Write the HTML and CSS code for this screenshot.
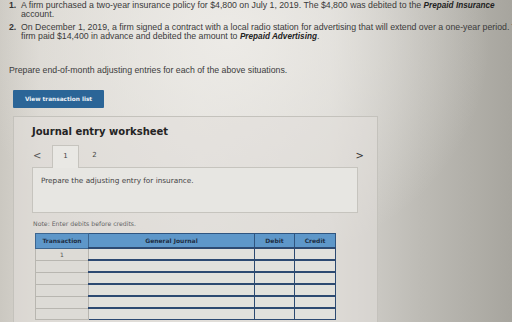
FILE: index.html
```html
<!DOCTYPE html>
<html>
<head>
<meta charset="utf-8">
<link rel="stylesheet" href="styles.css">
</head>
<body>
<div class="page">
  <div class="questions">
    <div class="q"><span class="num">1.</span><span class="qt">A firm purchased a two-year insurance policy for $4,800 on July 1, 2019. The $4,800 was debited to the <b><i>Prepaid Insurance</i></b> account.</span></div>
    <div class="q"><span class="num">2.</span><span class="qt">On December 1, 2019, a firm signed a contract with a local radio station for advertising that will extend over a one-year period. The firm paid $14,400 in advance and debited the amount to <b><i>Prepaid Advertising</i></b>.</span></div>
  </div>
  <p class="prompt">Prepare end-of-month adjusting entries for each of the above situations.</p>
  <div class="btn">View transaction list</div>
  <section class="panel">
    <h2 class="title">Journal entry worksheet</h2>
    <div class="tabs">
      <span class="arrow">&lt;</span>
      <span class="tab active">1</span>
      <span class="tab">2</span>
      <span class="spacer"></span>
      <span class="arrow right">&gt;</span>
    </div>
    <div class="content">Prepare the adjusting entry for insurance.</div>
    <p class="note">Note: Enter debits before credits.</p>
    <table class="jt">
      <thead>
        <tr><th class="c1">Transaction</th><th class="c2">General Journal</th><th class="c3">Debit</th><th class="c4">Credit</th></tr>
      </thead>
      <tbody>
        <tr><td class="c1">1</td><td class="in"></td><td class="in"></td><td class="in"></td></tr>
        <tr><td class="c1"></td><td class="in"></td><td class="in"></td><td class="in"></td></tr>
        <tr><td class="c1"></td><td class="in"></td><td class="in"></td><td class="in"></td></tr>
        <tr><td class="c1"></td><td class="in"></td><td class="in"></td><td class="in"></td></tr>
        <tr><td class="c1"></td><td class="in"></td><td class="in"></td><td class="in"></td></tr>
        <tr><td class="c1"></td><td class="in"></td><td class="in"></td><td class="in"></td></tr>
      </tbody>
    </table>
  </section>
</div>
</body>
</html>
```
FILE: styles.css
```css
html, body {
  margin: 0;
  padding: 0;
  height: 100%;
  overflow: hidden;
}
body {
  width: 512px;
  height: 322px;
  background:
    radial-gradient(ellipse 260px 230px at 230px 40px, rgba(238,236,232,0.9), rgba(238,236,232,0) 100%),
    linear-gradient(90deg, #cbc8c1 0px, #d9d6d0 40px, #e0ded9 200px, #d8d6d1 330px, #bdbbb5 420px, #a7a59e 512px);
  font-family: "Liberation Sans", Arial, sans-serif;
  color: #3a3a3a;
}
.page {
  padding: 1px 0 0 9px;
  height: 321px;
  overflow: hidden;
}
.questions {
  display: flex;
  flex-direction: column;
  gap: 4px;
  width: 518px;
}
.q {
  display: flex;
  font-size: 8.75px;
  line-height: 9px;
}
.num {
  width: 12px;
  flex: none;
  font-weight: bold;
  color: #333;
}
.qt {
  flex: 1;
}
.qt b {
  color: #222;
  font-size: 8.2px;
}
.prompt {
  margin: 24px 0 0 0;
  font-size: 8.75px;
  line-height: 10px;
  color: #3c3c3c;
}
.btn {
  margin: 15px 0 0 4px;
  width: 91px;
  height: 18px;
  background: #2b6597;
  color: #eef2f6;
  font-family: "DejaVu Sans", sans-serif;
  font-weight: bold;
  font-size: 5.8px;
  line-height: 18px;
  text-align: center;
  border-radius: 1px;
}
.panel {
  margin: 8px 0 0 4px;
  width: 365px;
  height: 210px;
  border: 1px solid #c4c2bc;
  border-bottom: none;
  background: rgba(225,223,218,0.55);
  padding: 0 0 0 18px;
  box-sizing: border-box;
  font-family: "DejaVu Sans", sans-serif;
}
.title {
  margin: 9px 0 0 0;
  font-size: 10px;
  line-height: 12px;
  font-weight: bold;
  color: #232323;
}
.tabs {
  display: flex;
  align-items: flex-end;
  height: 22px;
  margin-top: 7px;
  padding-left: 1px;
  width: 331px;
}
.arrow {
  font-size: 10px;
  line-height: 22px;
  height: 22px;
  width: 19px;
  color: #555;
}
.arrow.right {
  width: auto;
  color: #333;
}
.tab {
  width: 27px;
  height: 22px;
  font-size: 7px;
  line-height: 20px;
  text-align: center;
  color: #444;
  box-sizing: border-box;
}
.tab.active {
  border: 1px solid #c6c4be;
  border-bottom: none;
  background: #e9e8e4;
  margin-bottom: -1px;
  height: 23px;
  position: relative;
  z-index: 1;
}
.tab + .tab {
  margin-left: 2px;
}
.spacer {
  flex: 1;
}
.content {
  width: 326px;
  height: 46px;
  border: 1px solid #c6c4be;
  background: #e7e6e2;
  box-sizing: border-box;
  padding: 8px 0 0 8px;
  font-size: 7.3px;
  line-height: 10px;
  color: #444;
}
.note {
  margin: 7px 0 0 1px;
  font-size: 6.2px;
  line-height: 8px;
  color: #666;
}
.jt {
  margin: 5px 0 0 3px;
  border-collapse: collapse;
  table-layout: fixed;
  width: 296px;
}
.jt th {
  background: #5e97c9;
  color: #1f2f44;
  font-size: 6px;
  font-weight: bold;
  height: 13px;
  padding: 0;
  border: 1px solid #2f5580;
  text-align: center;
}
.jt th.c1 { width: 52px; border-color: #3d6690; }
.jt th.c2 { width: 165px; }
.jt th.c3 { width: 39px; }
.jt th.c4 { width: 40px; }
.jt td {
  height: 10px;
  padding: 0;
  font-size: 6px;
  text-align: center;
  color: #555;
}
.jt td.c1 {
  background: #dddbd6;
  border: 1px solid #b8b6b0;
}
.jt td.in {
  background: #e2e1dd;
  border: 1px solid #2d4a72;
  border-top-width: 2px;
}
```
